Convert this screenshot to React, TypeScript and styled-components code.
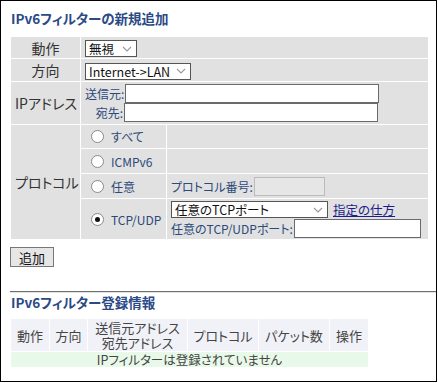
import styled, { createGlobalStyle } from "styled-components";

const GlobalStyle = createGlobalStyle`
  body {
    margin: 0;
    background: #fff;
    font-family: "Noto Sans CJK JP", "Liberation Sans", sans-serif;
    font-feature-settings: "palt";
  }
`;

const Page = styled.div`
  box-sizing: border-box;
  width: 437px;
  height: 382px;
  border: 1px solid #000;
  padding: 8px 0 0 9px;
`;

const Title = styled.h2`
  margin: 0 0 0 1px;
  font-size: 13.5px;
  line-height: 18px;
  font-weight: 700;
  color: #2b4a86;
`;

const FormTable = styled.table`
  margin: 9px 0 0 0;
  border-collapse: separate;
  border-spacing: 1px;
  table-layout: fixed;
  width: 419px;
`;

const Cell = styled.td<{ $label?: boolean; $h?: number }>`
  background: #e1e1e1;
  padding: 0 4px;
  box-sizing: border-box;
  height: ${(p) => (p.$h ? `${p.$h}px` : "auto")};
  color: ${(p) => (p.$label ? "#333" : "#2b4a7a")};
  text-align: ${(p) => (p.$label ? "center" : "left")};
  font-size: ${(p) => (p.$label ? "14px" : "12px")};
  vertical-align: middle;
  white-space: nowrap;
`;

const SelectBox = styled.div<{ $w: number }>`
  display: inline-flex;
  align-items: center;
  justify-content: space-between;
  box-sizing: border-box;
  width: ${(p) => p.$w}px;
  height: 17px;
  border: 1px solid #555;
  background: #fff;
  color: #111;
  font-size: 12.5px;
  line-height: 15px;
  padding: 0 4px 0 3px;
  vertical-align: middle;
`;

const Line = styled.div`
  display: flex;
  align-items: center;
  gap: 1px;
  height: 19px;
`;

const FieldLabel = styled.span<{ $w?: number }>`
  display: inline-block;
  width: ${(p) => (p.$w ? `${p.$w}px` : "auto")};
  text-align: right;
  color: #2b4a7a;
  font-size: 12px;
`;

const TextInput = styled.div<{ $w: number; $disabled?: boolean }>`
  box-sizing: border-box;
  width: ${(p) => p.$w}px;
  height: 19px;
  background: ${(p) => (p.$disabled ? "#e6e6e6" : "#fff")};
  border: 1px solid ${(p) => (p.$disabled ? "#bbb" : "#6a6a6a")};
`;

const RadioRow = styled.label`
  display: flex;
  align-items: center;
  gap: 7px;
  color: #2b4a7a;
  font-size: 12px;
`;

const RadioDot = styled.span<{ $checked?: boolean }>`
  position: relative;
  box-sizing: border-box;
  width: 13px;
  height: 13px;
  border-radius: 50%;
  border: 1px solid #8a8a8a;
  background: #fff;
  margin-left: 6px;

  &::after {
    content: "";
    display: ${(p) => (p.$checked ? "block" : "none")};
    position: absolute;
    left: 3px;
    top: 3px;
    width: 5px;
    height: 5px;
    border-radius: 50%;
    background: #111;
  }
`;

const HelpLink = styled.a`
  color: #1c1c8c;
  text-decoration: underline;
  font-size: 12.5px;
  margin-left: 4px;
`;

const AddButton = styled.button`
  display: block;
  margin: 7px 0 0 0;
  width: 44px;
  height: 20px;
  padding: 0;
  box-sizing: border-box;
  background: #e6e6e6;
  border: 1px solid #777;
  font-family: inherit;
  font-size: 13px;
  color: #111;
  line-height: 17px;
`;

const Rule = styled.hr`
  margin: 24px 0 0 0;
  border: none;
  border-top: 1px solid #6f6f6f;
  border-bottom: 1px solid #e4e4e4;
  height: 0;
`;

const ListTable = styled.table`
  margin: 7px 0 0 0;
  border-collapse: separate;
  border-spacing: 1px;
  table-layout: fixed;
  width: 359px;
  color: #444;
`;

const Head = styled.th`
  background: #f0f2f8;
  font-weight: 400;
  font-size: 13px;
  height: 32px;
  padding: 0;
  line-height: 15px;
  white-space: nowrap;
`;

const EmptyRow = styled.td`
  background: #e9f9e9;
  text-align: center;
  font-size: 12.5px;
  height: 15px;
  line-height: 15px;
  padding: 0;
`;

function Chevron() {
  return (
    <svg width="10" height="6" viewBox="0 0 10 6">
      <path d="M1 1 L5 5 L9 1" stroke="#999" strokeWidth="1.1" fill="none" />
    </svg>
  );
}

export default function App() {
  return (
    <>
      <GlobalStyle />
      <Page>
        <Title>IPv6フィルターの新規追加</Title>
        <FormTable>
          <colgroup>
            <col style={{ width: 69 }} />
            <col style={{ width: 85 }} />
            <col />
          </colgroup>
          <tbody>
            <tr>
              <Cell $label $h={21}>動作</Cell>
              <Cell colSpan={2}>
                <SelectBox $w={52}>
                  <span>無視</span>
                  <Chevron />
                </SelectBox>
              </Cell>
            </tr>
            <tr>
              <Cell $label $h={22}>方向</Cell>
              <Cell colSpan={2}>
                <SelectBox $w={106}>
                  <span>Internet-&gt;LAN</span>
                  <Chevron />
                </SelectBox>
              </Cell>
            </tr>
            <tr>
              <Cell $label $h={42}>IPアドレス</Cell>
              <Cell colSpan={2}>
                <Line>
                  <FieldLabel $w={39}>送信元:</FieldLabel>
                  <TextInput $w={254} />
                </Line>
                <Line>
                  <FieldLabel $w={38}>宛先:</FieldLabel>
                  <TextInput $w={254} />
                </Line>
              </Cell>
            </tr>
            <tr>
              <Cell $label rowSpan={4}>プロトコル</Cell>
              <Cell $h={23}>
                <RadioRow><RadioDot />すべて</RadioRow>
              </Cell>
              <Cell />
            </tr>
            <tr>
              <Cell $h={24}>
                <RadioRow><RadioDot />ICMPv6</RadioRow>
              </Cell>
              <Cell />
            </tr>
            <tr>
              <Cell $h={24}>
                <RadioRow><RadioDot />任意</RadioRow>
              </Cell>
              <Cell>
                <Line>
                  <FieldLabel>プロトコル番号:</FieldLabel>
                  <TextInput $w={71} $disabled />
                </Line>
              </Cell>
            </tr>
            <tr>
              <Cell $h={40}>
                <RadioRow><RadioDot $checked />TCP/UDP</RadioRow>
              </Cell>
              <Cell>
                <Line>
                  <SelectBox $w={157}>
                    <span>任意のTCPポート</span>
                    <Chevron />
                  </SelectBox>
                  <HelpLink href="#">指定の仕方</HelpLink>
                </Line>
                <Line>
                  <FieldLabel>任意のTCP/UDPポート:</FieldLabel>
                  <TextInput $w={127} />
                </Line>
              </Cell>
            </tr>
          </tbody>
        </FormTable>
        <AddButton>追加</AddButton>
        <Rule />
        <Title>IPv6フィルター登録情報</Title>
        <ListTable>
          <colgroup>
            <col style={{ width: 38 }} />
            <col style={{ width: 37 }} />
            <col style={{ width: 99 }} />
            <col style={{ width: 70 }} />
            <col style={{ width: 70 }} />
            <col style={{ width: 38 }} />
          </colgroup>
          <thead>
            <tr>
              <Head>動作</Head>
              <Head>方向</Head>
              <Head>送信元アドレス<br />宛先アドレス</Head>
              <Head>プロトコル</Head>
              <Head>パケット数</Head>
              <Head>操作</Head>
            </tr>
          </thead>
          <tbody>
            <tr>
              <EmptyRow colSpan={6}>IPフィルターは登録されていません</EmptyRow>
            </tr>
          </tbody>
        </ListTable>
      </Page>
    </>
  );
}
